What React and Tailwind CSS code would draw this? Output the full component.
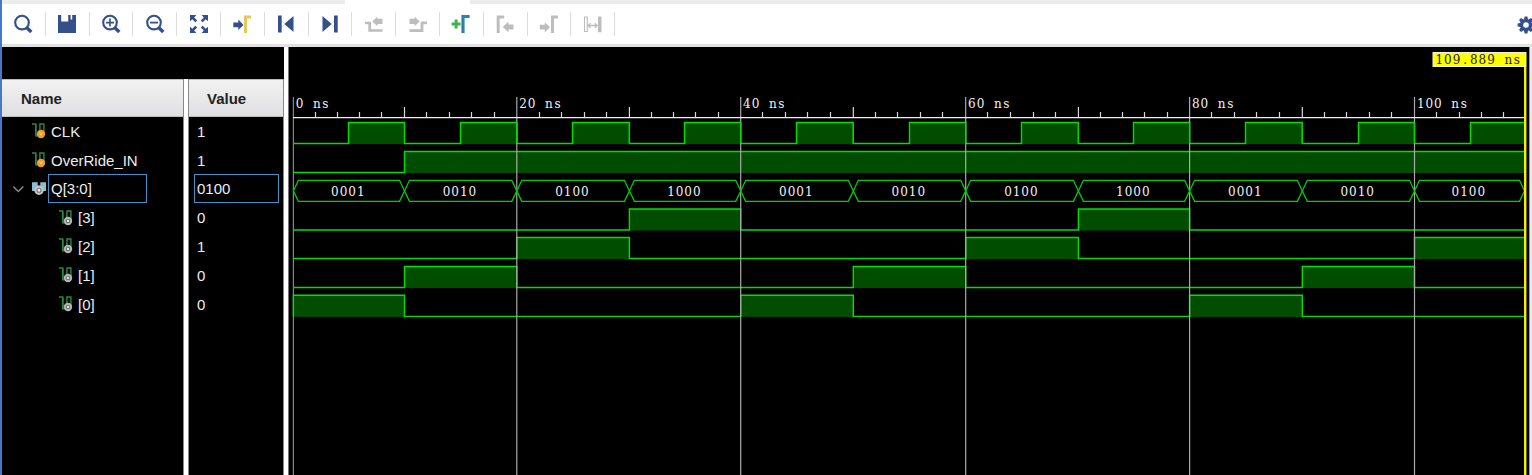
import React from "react";

const NAVY = "#34508a";
const GREY = "#bdbdbd";

const Icon = ({ children }) => (
  <svg width="20" height="20" viewBox="0 0 20 20" fill="none" className="block shrink-0">
    {children}
  </svg>
);

const Lens = ({ children }) => (
  <Icon>
    <circle cx="9" cy="8.6" r="6.8" stroke={NAVY} strokeWidth="2.1" />
    <path d="M13.8 13.8L18.3 18.1" stroke={NAVY} strokeWidth="3.4" />
    {children}
  </Icon>
);

const icons = [
  <Lens />,
  <Icon>
    <path d="M1 1h3.2v6.4h7V1h2.4v4.6h1.6V1H19v18H1z" fill={NAVY} />
  </Icon>,
  <Lens><path d="M5 8.6h8M9 4.6v8" stroke={NAVY} strokeWidth="1.6" /></Lens>,
  <Lens><path d="M5 8.6h8" stroke={NAVY} strokeWidth="1.8" /></Lens>,
  <Icon>
    <path d="M1 1h6.3L5.2 3.4l3 3-1.9 1.9-3-3L1 7.3zM19 1v6.3l-2.3-2-3 3-1.9-1.9 3-3L12.7 1zM1 19v-6.3l2.3 2 3-3 1.9 1.9-3 3L7.3 19zM19 19h-6.3l2.1-2.4-3-3 1.9-1.9 3 3 2.3-2z" fill={NAVY} />
  </Icon>,
  <Icon>
    <path d="M1.3 8.4h5V5.6L11.5 11l-5.2 5.1v-2.8h-5z" fill={NAVY} />
    <path d="M13.5 19V3H19" stroke="#e5c85c" strokeWidth="3" />
  </Icon>,
  <Icon><path d="M2 1.5h3.7v17H2zM17.5 2v16L8.3 10z" fill={NAVY} /></Icon>,
  <Icon><path d="M14 1.5h3.7v17H14zM2.5 2v16l9.2-8z" fill={NAVY} /></Icon>,
  <Icon>
    <path d="M1 9h4.7v7.5H18.5" stroke={GREY} strokeWidth="2.7" />
    <path d="M18.5 4.7h-5V2.4L8.3 7.4l5.2 4.9V9.9h5z" fill={GREY} />
  </Icon>,
  <Icon>
    <path d="M1.5 16.7H14V8.8h5" stroke={GREY} strokeWidth="2.7" />
    <path d="M1.5 4.7h5V2.4l5.2 5-5.2 4.9V9.9h-5z" fill={GREY} />
  </Icon>,
  <Icon>
    <path d="M.6 10h9M5.1 5.6v8.8" stroke="#3fb548" strokeWidth="3" />
    <path d="M12 19V2.5H18.6" stroke="#2f7db5" strokeWidth="3.2" />
  </Icon>,
  <Icon>
    <path d="M3.2 19V3h6" stroke={GREY} strokeWidth="3" />
    <path d="M18.5 10.4h-5V7.6L7.8 12.9l5.7 5.4v-2.8h5z" fill={GREY} />
  </Icon>,
  <Icon>
    <path d="M13.5 19V3H19" stroke={GREY} strokeWidth="3" />
    <path d="M.8 10.8h5V8.2l5.2 5.1-5.2 5v-2.7h-5z" fill={GREY} />
  </Icon>,
  <Icon>
    <path d="M1.5 3h2.8v14.5H1.5z" stroke={GREY} strokeWidth="1.1" />
    <path d="M15 2.5h3.5v15.7H15z" fill={GREY} />
    <path d="M5.5 11.5h8.5M7.5 9.2l-2.3 2.3 2.3 2.3M11.8 9.2l2.3 2.3-2.3 2.3" stroke={GREY} strokeWidth="1.3" />
  </Icon>,
];

const Gear = () => (
  <svg width="18" height="18" viewBox="0 0 18 18" className="block shrink-0">
    {[0, 45, 90, 135].map((a) => (
      <path key={a} d="M7.6 .6h2.8l.8 4v8.8l-.8 4H7.6l-.8-4V4.6z" fill={NAVY} transform={`rotate(${a} 9 9)`} />
    ))}
    <circle cx="9" cy="9" r="6" fill={NAVY} />
    <circle cx="9" cy="9" r="2.8" fill="white" />
  </svg>
);

const SignalIcon = ({ color }) => (
  <svg width="15" height="16" viewBox="0 0 15 16" fill="none" className="block shrink-0">
    <path d="M0 1h3.7V12.9h4.2V1h4V9" stroke="#2a8c40" strokeWidth="1.4" />
    <path d="M4 1.5v11.5" stroke="#28863b" strokeWidth="1.2" />
    <circle cx="9" cy="11" r="4.2" fill={color} />
    {color === "#f39a2d" ? (
      <path d="M7.6 9.4l1.4 2.8 1.4-2.8" stroke="#ffd9a0" strokeWidth="1" />
    ) : (
      <circle cx="9" cy="11" r="1.7" fill="#eee" stroke="#707070" strokeWidth="1.1" />
    )}
  </svg>
);

const BusIcon = () => (
  <svg width="16" height="16" viewBox="0 0 16 16" className="block shrink-0">
    <path d="M0 1.3h5.7v3.4h2.6V1.3H14v8.6H0z" fill="#8dbdd6" />
    <circle cx="7" cy="9.2" r="4.7" fill="#c4c4c4" />
    <circle cx="7" cy="9.2" r="2" fill="#eee" stroke="#777" strokeWidth="1.1" />
  </svg>
);

const ORANGE = "#f39a2d";
const SILVER = "#b5b5b5";
const signals = [
  { name: "CLK", value: "1", color: ORANGE },
  { name: "OverRide_IN", value: "1", color: ORANGE },
  { name: "Q[3:0]", value: "0100", bus: true },
  { name: "[3]", value: "0", color: SILVER, child: true },
  { name: "[2]", value: "1", color: SILVER, child: true },
  { name: "[1]", value: "0", color: SILVER, child: true },
  { name: "[0]", value: "0", color: SILVER, child: true },
];

const END = 109.889;
const DECADES = [293.4, 404.5, 516.8, 629.4, 740.7, 853.3, 965.7, 1078.4, 1189.6, 1302.3, 1414.5, 1526.5];
const xAt = (t) => {
  if (t >= END) return 1524.5;
  const i = Math.floor(t / 10);
  const f = (t % 10) / 10;
  return f ? Math.floor(DECADES[i] + (DECADES[i + 1] - DECADES[i]) * f - 0.3) + 0.5 : DECADES[i];
};
const FACE = "'DejaVu Serif', serif";

const Mono = ({ x, y, children, fill = "#f2f2f2" }) => (
  <text
    x={[...children].map((_, i) => x + 4.3 + i * 8.62).join(" ")}
    y={y}
    fontSize="12"
    fontFamily={FACE}
    textAnchor="middle"
    fill={fill}
    style={{ whiteSpace: "pre" }}
  >
    {children}
  </text>
);

const Digital = ({ top, low, pulses }) => {
  let d = `M293 ${low}`;
  pulses.forEach(([a, b]) => {
    d += `H${xAt(a)}V${top}H${xAt(b)}`;
    if (b < END) d += `V${low}`;
  });
  if (pulses[pulses.length - 1][1] < END) d += "H1524.5";
  return (
    <g>
      {pulses.map(([a, b]) => (
        <rect key={a} x={xAt(a)} y={top} width={xAt(b) - xAt(a)} height={low - top + 0.5} fill="#004d00" />
      ))}
      <path d={d} fill="none" stroke="#00e000" strokeWidth="1.4" />
    </g>
  );
};

const clock = Array.from({ length: 11 }, (_, i) => [5 + i * 10, Math.min(10 + i * 10, 110)]);
const words = ["0001", "0010", "0100", "1000"];

const Waves = () => (
  <svg width="1240" height="428" viewBox="289 47 1240 428" className="block shrink-0">
    <rect x="289" y="47" width="1240" height="428" fill="black" />
    <Digital top={122.5} low={143.5} pulses={clock} />
    <Digital top={151.5} low={172.5} pulses={[[10, 110]]} />
    <Digital top={209} low={230} pulses={[[30, 40], [70, 80]]} />
    <Digital top={237.5} low={258.5} pulses={[[20, 30], [60, 70], [100, 110]]} />
    <Digital top={266.5} low={287.5} pulses={[[10, 20], [50, 60], [90, 100]]} />
    <Digital top={295.2} low={316.4} pulses={[[0, 10], [40, 50], [80, 90]]} />
    {[0, 20, 40, 60, 80, 100].map((t) => (
      <g key={t}>
        <path d={`M${xAt(t)} 97V475`} stroke={t ? "#aaaaaa" : "#858585"} strokeWidth="1.2" />
        <Mono x={xAt(t) + 1.9} y={108.3}>{`${t} ns`}</Mono>
      </g>
    ))}
    {[10, 20, 30, 40, 50, 60, 70, 80, 90, 100].map((t) => (
      <path key={t} d={`M${xAt(t)} ${122.5}V143.5`} stroke="#00d800" strokeWidth="1.2" />
    ))}
    {Array.from({ length: 55 }, (_, i) => i * 2).filter((t) => t % 20).map((t) => (
      <path key={t} d={`M${xAt(t)} ${t % 10 ? 112 : 107}V117`} stroke="#d8d8d8" strokeWidth="1.2" />
    ))}
    <path d="M293 117.6H1526" stroke="#ededed" strokeWidth="1.4" />
    {Array.from({ length: 11 }, (_, i) => {
      const a = xAt(i * 10);
      const b = xAt(i * 10 + 10);
      return (
        <g key={i}>
          <path d={`M${a} 191L${a + 5} 180.3H${b - 5}L${b} 191L${b - 5} 201.3H${a + 5}Z`} fill="none" stroke="#00cf00" strokeWidth="1.3" />
          <Mono x={(a + b) / 2 - 18.4} y={195.5}>{words[i % 4]}</Mono>
        </g>
      );
    })}
    <path d="M1525.2 67V475" stroke="#f4f000" strokeWidth="2.4" />
    <rect x="1433" y="52.5" width="93" height="14" fill="#ffff00" stroke="#f0f0d8" />
    <Mono x={1435} y={64.3} fill="#222200">109.889 ns</Mono>
  </svg>
);

export default function App() {
  return (
    <div className="flex h-[475px] w-[1532px] overflow-hidden bg-white font-['Liberation_Sans',sans-serif] text-[15px] text-[#ededed]">
      <div className="w-[2px] shrink-0 bg-[#4878cc]" />
      <div className="flex w-[1530px] shrink-0 flex-col">
        <div className="flex h-1 shrink-0 justify-between bg-[#ececec]">
          <div className="ml-[343px] w-[125px] bg-white" />
        </div>
        <div className="flex h-[43px] shrink-0 items-start border-b-[3px] border-[#e2e2e2]">
          {icons.map((icon, i) => (
            <div key={i} className="mt-2 flex h-6 w-[43.8px] shrink-0 items-center justify-center border-r-[1.5px] border-[#dcdcdc]">
              {icon}
            </div>
          ))}
          <div className="mt-[12px] ml-auto -mr-[3px]"><Gear /></div>
        </div>
        <div className="flex h-[428px]">
          <div className="flex w-[282px] shrink-0 flex-col">
            <div className="h-8 shrink-0 bg-black" />
            <div className="flex grow bg-white">
              <div className="w-[182px] shrink-0 border-r border-[#888] bg-black">
                <div className="flex h-[38px] items-center border-t border-b border-[#bcbcbc] bg-linear-to-b from-[#f2f2f2] to-[#e0e0e2] pt-[2px] pl-[19px] font-bold text-[#222]">
                  Name
                </div>
                {signals.map((s) => (
                  <div key={s.name} className={s.child ? "flex h-[28.77px] items-center pl-[57px]" : "flex h-[28.77px] items-center pl-[10px]"}>
                    {!s.child && (
                      <span className="flex w-5 shrink-0">
                        {s.bus && (
                          <svg width="12" height="10" viewBox="0 0 12 10" fill="none">
                            <path d="M1.3 2.5L6.3 7.5 11.3 2.5" stroke="#888" strokeWidth="1.5" />
                          </svg>
                        )}
                      </span>
                    )}
                    {s.bus ? <BusIcon /> : <SignalIcon color={s.color} />}
                    {s.bus ? (
                      <span className="flex h-[29px] w-[99px] items-center border border-[#4391c9] pt-px pl-[2px]">{s.name}</span>
                    ) : (
                      <span className="pt-[2px] pl-[4px]">{s.name}</span>
                    )}
                  </div>
                ))}
              </div>
              <div className="ml-[4px] w-[96px] border-x border-[#888] bg-black">
                <div className="flex h-[38px] items-center border-t border-b border-[#bcbcbc] bg-linear-to-b from-[#f2f2f2] to-[#e0e0e2] pt-[2px] pl-[18px] font-bold text-[#222]">
                  Value
                </div>
                {signals.map((s) => (
                  <div key={s.name} className="flex h-[28.77px] items-center pl-[5px]">
                    <span className={s.bus ? "flex h-[29px] w-[85px] items-center border border-[#4391c9] pt-px pl-[2px]" : "pt-[2px] pl-[3px]"}>{s.value}</span>
                  </div>
                ))}
              </div>
            </div>
          </div>
          <div className="w-[5px] shrink-0 border-r border-[#777] bg-white" />
          <Waves />
          <div className="w-[3px] shrink-0 border-l border-[#999] bg-[#ececec]" />
        </div>
      </div>
    </div>
  );
}
